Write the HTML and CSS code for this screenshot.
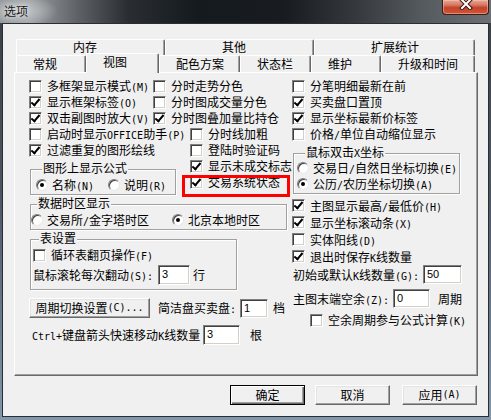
FILE: index.html
```html
<!DOCTYPE html>
<html>
<head>
<meta charset="utf-8">
<link rel="stylesheet" href="styles.css">
</head>
<body>
<div class="window">
  <div class="titlebar">
    <span class="title">选项</span>
    <div class="close">
      <svg width="14" height="11" viewBox="0 0 14 11"><path d="M3 1 L11 9 M11 1 L3 9" stroke="#3a1710" stroke-width="4" stroke-linecap="square"/><path d="M3 1 L11 9 M11 1 L3 9" stroke="#fff" stroke-width="2" stroke-linecap="square"/></svg>
    </div>
  </div>
  <div class="client">
    <div class="tabs">
      <div class="tabrow back">
        <div class="tab t-nc">内存</div>
        <div class="tab t-qt">其他</div>
        <div class="tab t-kz">扩展统计</div>
      </div>
      <div class="tabrow front">
        <div class="tab t-cg">常规</div>
        <div class="tab t-st sel">视图</div>
        <div class="tab t-ps">配色方案</div>
        <div class="tab t-zt">状态栏</div>
        <div class="tab t-wh">维护</div>
        <div class="tab t-sj">升级和时间</div>
      </div>
    </div>
    <div class="panel">
      <div class="left">
        <div class="top">
          <div class="colA">
            <div class="row"><span class="cb"></span><span class="lbl">多框架显示模式<span class="en">(M)</span></span></div>
            <div class="row"><span class="cb on"></span><span class="lbl">显示框架标签<span class="en">(O)</span></span></div>
            <div class="row"><span class="cb on"></span><span class="lbl">双击副图时放大<span class="en">(V)</span></span></div>
            <div class="row"><span class="cb"></span><span class="lbl">启动时显示<span class="en">OFFICE</span>助手<span class="en">(P)</span></span></div>
            <div class="row"><span class="cb on"></span><span class="lbl">过滤重复的图形绘线</span></div>
            <div class="group g1">
              <span class="gtitle">图形上显示公式</span>
              <div class="row">
                <div class="ritem g1-first"><span class="rb on"></span><span class="lbl">名称<span class="en">(N)</span></span></div>
                <div class="ritem"><span class="rb"></span><span class="lbl">说明<span class="en">(R)</span></span></div>
              </div>
            </div>
          </div>
          <div class="colB">
            <div class="row"><span class="cb"></span><span class="lbl">分时走势分色</span></div>
            <div class="row"><span class="cb"></span><span class="lbl">分时图成交量分色</span></div>
            <div class="row"><span class="cb on"></span><span class="lbl">分时图叠加量比持仓</span></div>
            <div class="sub">
              <div class="row"><span class="cb"></span><span class="lbl">分时线加粗</span></div>
              <div class="row"><span class="cb"></span><span class="lbl">登陆时验证码</span></div>
              <div class="row"><span class="cb on"></span><span class="lbl">显示未成交标志</span></div>
              <div class="row hl"><span class="cb on"></span><span class="lbl">交易系统状态</span></div>
            </div>
          </div>
        </div>
        <div class="group g2">
          <span class="gtitle">数据时区显示</span>
          <div class="row">
            <div class="ritem g2-first"><span class="rb"></span><span class="lbl">交易所<span class="en">/</span>金字塔时区</span></div>
            <div class="ritem"><span class="rb on"></span><span class="lbl">北京本地时区</span></div>
          </div>
        </div>
        <div class="group g3">
          <span class="gtitle">表设置</span>
          <div class="row"><span class="cb"></span><span class="lbl">循环表翻页操作<span class="en">(F)</span></span></div>
          <div class="row frow">
            <span class="lbl l-gl">鼠标滚轮每次翻动<span class="en">(S):</span></span>
            <span class="inp i-gl">3</span>
            <span class="lbl after-hang">行</span>
          </div>
        </div>
        <div class="row btnrow">
          <div class="btn b-zq">周期切换设置<span class="en">(C)...</span></div>
          <span class="lbl l-jj">简洁盘买卖盘<span class="en">:</span></span>
          <span class="inp i-jj">1</span>
          <span class="lbl after-dang">档</span>
        </div>
        <div class="row ctrlrow">
          <span class="lbl l-ctrl"><span class="en">Ctrl+</span>键盘箭头快速移动<span class="en">K</span>线数量</span>
          <span class="inp i-ctrl">3</span>
          <span class="lbl after-gen">根</span>
        </div>
      </div>
      <div class="right">
        <div class="row"><span class="cb"></span><span class="lbl">分笔明细最新在前</span></div>
        <div class="row"><span class="cb on"></span><span class="lbl">买卖盘口置顶</span></div>
        <div class="row"><span class="cb on"></span><span class="lbl">显示坐标最新价标签</span></div>
        <div class="row"><span class="cb"></span><span class="lbl">价格<span class="en">/</span>单位自动缩位显示</span></div>
        <div class="group g4">
          <span class="gtitle">鼠标双击<span class="en">X</span>坐标</span>
          <div class="row"><span class="rb"></span><span class="lbl">交易日<span class="en">/</span>自然日坐标切换<span class="en">(E)</span></span></div>
          <div class="row"><span class="rb on"></span><span class="lbl">公历<span class="en">/</span>农历坐标切换<span class="en">(A)</span></span></div>
        </div>
        <div class="lower">
          <div class="row r17"><span class="cb on"></span><span class="lbl">主图显示最高<span class="en">/</span>最低价<span class="en">(H)</span></span></div>
          <div class="row r17"><span class="cb on"></span><span class="lbl">显示坐标滚动条<span class="en">(X)</span></span></div>
          <div class="row r17"><span class="cb"></span><span class="lbl">实体阳线<span class="en">(D)</span></span></div>
          <div class="row r17"><span class="cb on"></span><span class="lbl">退出时保存<span class="en">K</span>线数量</span></div>
          <div class="row frow19">
            <span class="lbl l-cs">初始或默认<span class="en">K</span>线数量<span class="en">(G):</span></span>
            <span class="inp i-cs">50</span>
          </div>
          <div class="row frow19 zt">
            <span class="lbl l-zt">主图末端空余<span class="en">(Z):</span></span>
            <span class="inp i-zt">0</span>
            <span class="lbl after-zq">周期</span>
          </div>
          <div class="row ky"><span class="cb"></span><span class="lbl">空余周期参与公式计算<span class="en">(K)</span></span></div>
        </div>
      </div>
    </div>
    <div class="footer">
      <div class="btn fbtn default">确定</div>
      <div class="btn fbtn f-cancel">取消</div>
      <div class="btn fbtn">应用<span class="en">(A)</span></div>
    </div>
  </div>
</div>
</body>
</html>
```

FILE: styles.css
```css
* { box-sizing: border-box; }
body {
  margin: 0;
  width: 491px;
  height: 420px;
  overflow: hidden;
  font-family: "Noto Sans CJK SC", "Noto Sans CJK JP", sans-serif;
  font-size: 12px;
  color: #000;
}
.window {
  width: 491px;
  height: 420px;
  display: flex;
  flex-direction: column;
  background: linear-gradient(180deg, #3a3e43 0%, #4b5562 45%, #8296ac 100%);
}
.titlebar {
  height: 23px;
  flex: none;
  display: flex;
  justify-content: space-between;
  align-items: flex-start;
  background:
    radial-gradient(ellipse 40px 16px at 18px 11px, rgba(210,212,214,0.85), rgba(210,212,214,0) 100%),
    linear-gradient(90deg, #8a8e92 0%, #9a9ea2 6%, #5d6166 16%, #2a2e33 26%, #151a1f 40%, #181c21 58%, #34383c 72%, #555a5e 86%, #6c7074 100%);
}
.title {
  margin: 3px 0 0 4px;
  line-height: 16px;
  font-size: 12px;
  color: #1a1a1a;
  text-shadow: 0 0 5px rgba(255,255,255,0.9);
}
.close {
  width: 47px;
  height: 15px;
  margin-right: 2px;
  border: 1px solid #3b1c16;
  border-top: none;
  border-radius: 0 0 4px 4px;
  background: linear-gradient(180deg, #e4a894 0%, #d87a64 35%, #c4432b 55%, #cf5638 100%);
  box-shadow: inset 0 0 0 1px rgba(255,210,190,0.45);
  display: flex;
  justify-content: center;
  align-items: flex-start;
}
.close svg { margin-top: -1px; }

.client {
  flex: 1;
  margin: 0 2px 3px;
  border: 1px solid #2a2e33;
  background: #f0f0f0;
  padding-top: 15px;
}

/* tabs */
.tabs { margin-left: 13px; }
.tabrow { display: flex; align-items: flex-start; }
.tab {
  border: 1px solid;
  border-color: #fff #696969 transparent #fff;
  border-bottom: none;
  border-radius: 2px 2px 0 0;
  box-shadow: inset -1px 0 #a0a0a0;
  background: #f0f0f0;
  white-space: nowrap;
}
.back .tab { height: 16px; line-height: 14px; padding-left: 56px; }
.front .tab { height: 17px; line-height: 16px; padding-left: 16px; }
.front .tab.sel {
  height: 20px;
  margin-top: -2px;
  margin-bottom: -1px;
  position: relative;
  z-index: 2;
}
.t-nc { width: 149px; }
.t-qt { width: 149px; }
.t-kz { width: 161px; }
.t-cg { width: 70px; }
.t-st { width: 73px; }
.t-ps { width: 81px; }
.t-zt { width: 71px; }
.t-wh { width: 70px; }
.t-sj { width: 94px; }

/* panel */
.panel {
  margin-left: 11px;
  width: 464px;
  height: 304px;
  border: 1px solid;
  border-color: #fff #696969 #696969 #fff;
  box-shadow: inset -1px -1px #a0a0a0;
  display: flex;
  padding: 5px 0 0 14px;
}
.left { width: 263px; flex: none; }
.right { width: 170px; flex: none; }
.top { display: flex; }
.colA { width: 124px; flex: none; }
.colB { flex: 1; }
.sub { margin-left: 37px; }

.row {
  display: flex;
  align-items: center;
  height: 16px;
  line-height: 16px;
  white-space: nowrap;
}
.lbl { white-space: nowrap; flex: none; }
.en {
  font-family: "DejaVu Sans Mono", "Liberation Mono", monospace;
  font-size: 10px;
  line-height: 1;
}

.cb {
  flex: none;
  width: 13px;
  height: 13px;
  margin-right: 5px;
  background: #fff;
  border: 1px solid;
  border-color: #808080 #fff #fff #808080;
  box-shadow: inset 1px 1px #404040, inset -1px -1px #d4d0c8;
  display: flex;
  align-items: center;
  justify-content: center;
}
.cb.on::after {
  content: "";
  width: 3px;
  height: 7px;
  border: solid #000;
  border-width: 0 2px 2px 0;
  transform: rotate(40deg);
  margin-top: -2px;
}
.rb {
  flex: none;
  width: 12px;
  height: 12px;
  margin-right: 4px;
  border-radius: 50%;
  background: #fff;
  border: 1px solid;
  border-color: #808080 #e8e8e8 #e8e8e8 #808080;
  box-shadow: inset 1px 1px #404040;
  display: flex;
  align-items: center;
  justify-content: center;
}
.rb.on::after {
  content: "";
  width: 4px;
  height: 4px;
  border-radius: 50%;
  background: #000;
}
.ritem { display: flex; align-items: center; }

/* red highlight */
.hl { position: relative; }
.hl::after {
  content: "";
  position: absolute;
  left: -8px;
  right: 2px;
  top: 1px;
  bottom: -7px;
  border: 3px solid #f00;
}

/* group boxes */
.group {
  border: 1px solid #a0a0a0;
  box-shadow: inset 1px 1px #fff, 1px 1px #fff;
}
.gtitle {
  display: block;
  width: max-content;
  margin: -9px 0 2px 6px;
  padding: 0 1px;
  background: #f0f0f0;
  line-height: 14px;
  position: relative;
}
.g1 { margin: 11px 0 0 1px; width: 146px; padding: 0 0 1px 5px; }
.g1-first { width: 72px; }
.g2 { margin: 9px 0 0 1px; width: 257px; padding: 0 0 1px 0; }
.g2 .row { margin-top: 1px; }
.g2-first { width: 141px; }
.g3 { margin: 9px 0 0 1px; width: 207px; padding: 0 0 4px 2px; }
.g3 .row { margin-top: 2px; }
.g3 .frow { height: 20px; }
.g4 { margin: 11px 0 0 1px; width: 167px; padding: 0 0 1px 3px; }
.g4 .gtitle { margin: -9px 0 1px 8px; }
.r17 { height: 17px; }
.lower { margin-top: 3px; }
.frow19 { height: 19px; padding-left: 1px; }
.zt { margin-top: 5px; }
.ky { margin-top: 4px; padding-left: 18px; }

/* inputs */
.inp {
  flex: none;
  display: block;
  height: 100%;
  background: #fff;
  border: 1px solid;
  border-color: #808080 #fff #fff #808080;
  box-shadow: inset 1px 1px #404040, inset -1px -1px #d4d0c8;
  font-family: "Liberation Sans", sans-serif;
  font-size: 11px;
  line-height: 13px;
  padding: 2px 0 0 3px;
}
.l-gl { width: 125px; }
.i-gl { width: 32px; }
.after-hang { margin-left: 3px; }
.l-jj { width: 82px; }
.i-jj { width: 28px; height: 19px; }
.after-dang { margin-left: 5px; }
.l-ctrl { width: 171px; }
.i-ctrl { width: 37px; }
.after-gen { margin-left: 10px; }
.l-cs { width: 130px; }
.i-cs { width: 39px; }
.l-zt { width: 100px; }
.i-zt { width: 37px; }
.after-zq { margin-left: 8px; }

.btnrow { height: 20px; margin-top: 8px; }
.ctrlrow { height: 20px; margin-top: 7px; padding-left: 3px; }

/* buttons */
.btn {
  flex: none;
  height: 20px;
  background: #f0f0f0;
  border: 1px solid;
  border-color: #fff #696969 #696969 #fff;
  box-shadow: inset -1px -1px #a0a0a0, inset 1px 1px #e3e3e3;
  display: flex;
  align-items: center;
  justify-content: center;
  line-height: 16px;
  white-space: nowrap;
}
.b-zq { width: 121px; margin-right: 8px; }
.footer {
  display: flex;
  justify-content: flex-end;
  margin-top: 9px;
  padding-right: 11px;
}
.fbtn { width: 75px; }
.default {
  border-color: #000;
  box-shadow: inset 1px 1px #fff, inset -1px -1px #696969, inset -2px -2px #a0a0a0;
  margin-right: 10px;
}
.f-cancel { margin-right: 12px; }
```
